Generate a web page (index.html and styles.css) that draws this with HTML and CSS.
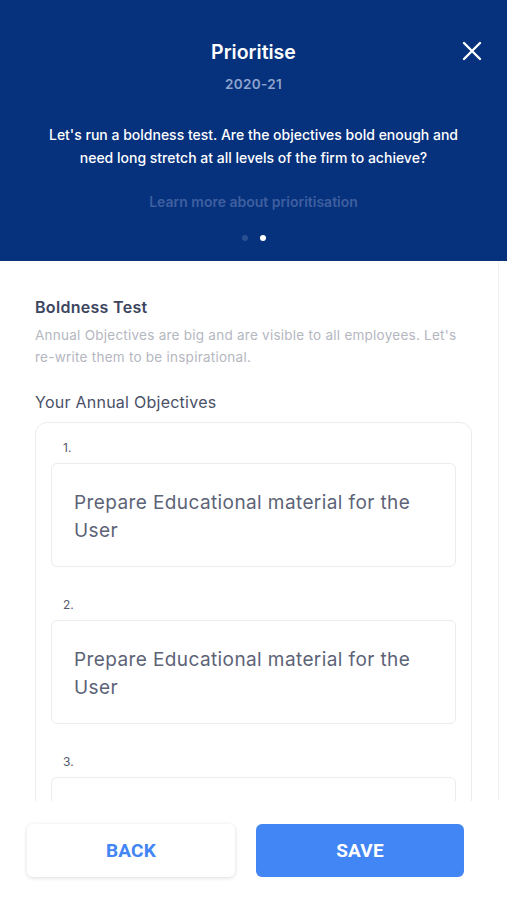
FILE: index.html
```html
<!DOCTYPE html>
<html lang="en">
<head>
<meta charset="utf-8">
<title>Prioritise</title>
<link rel="stylesheet" href="styles.css">
</head>
<body>
<div class="screen">
  <header class="hero">
    <h1 class="hero-title">Prioritise</h1>
    <div class="hero-year">2020-21</div>
    <p class="hero-text">Let's run a boldness test. Are the objectives bold enough and need long stretch at all levels of the firm to achieve?</p>
    <a class="hero-link">Learn more about prioritisation</a>
    <div class="dots"><span class="dot"></span><span class="dot active"></span></div>
    <button class="close" aria-label="Close">
      <svg width="20" height="20" viewBox="0 0 20 20"><path d="M2 2 L18 18 M18 2 L2 18" stroke="#fff" stroke-width="2.4" stroke-linecap="round"/></svg>
    </button>
  </header>
  <main class="content">
    <h2 class="section-title">Boldness Test</h2>
    <p class="section-desc">Annual Objectives are big and are visible to all employees. Let's re-write them to be inspirational.</p>
    <h3 class="list-title">Your Annual Objectives</h3>
    <div class="card">
      <div class="item">
        <div class="item-num">1.</div>
        <div class="item-box">Prepare Educational material for the User</div>
      </div>
      <div class="item">
        <div class="item-num">2.</div>
        <div class="item-box">Prepare Educational material for the User</div>
      </div>
      <div class="item">
        <div class="item-num">3.</div>
        <div class="item-box"></div>
      </div>
    </div>
  </main>
  <footer class="actions">
    <button class="btn btn-back">BACK</button>
    <button class="btn btn-save">SAVE</button>
  </footer>
</div>
</body>
</html>
```
FILE: styles.css
```css
* { box-sizing: border-box; }
html, body { margin: 0; padding: 0; background: #fff; }
body { font-family: Inter, "Noto Sans", sans-serif; }
.screen {
  width: 507px;
  height: 900px;
  display: flex;
  flex-direction: column;
  overflow: hidden;
}
.hero {
  position: relative;
  height: 261px;
  flex: none;
  background: #06317d;
  color: #fff;
  display: flex;
  flex-direction: column;
  align-items: center;
  text-align: center;
  padding-top: 40px;
}
.hero-title {
  margin: 0;
  font-size: 19.5px;
  line-height: 24px;
  font-weight: 600;
}
.hero-year {
  margin-top: 11px;
  font-size: 13.5px;
  line-height: 18px;
  font-weight: 600;
  color: #8ea4cc;
  letter-spacing: 0.3px;
}
.hero-text {
  margin: 30px 0 0;
  width: 440px;
  font-size: 14px;
  line-height: 23px;
  font-weight: 500;
}
.hero-link {
  margin-top: 24px;
  font-size: 14px;
  line-height: 18px;
  font-weight: 600;
  color: #3e5f9f;
}
.dots {
  margin-top: 24px;
  display: flex;
  gap: 12px;
}
.dot {
  width: 6px;
  height: 6px;
  border-radius: 50%;
  background: #2a4f90;
}
.dot.active { background: #fff; }
.close {
  position: absolute;
  top: 41px;
  right: 25px;
  width: 20px;
  height: 20px;
  padding: 0;
  border: 0;
  background: none;
}
.content {
  flex: 1;
  overflow: hidden;
  padding: 0 35px;
  border-right: 1px solid #f2f2f4;
  margin-right: 8px;
}
.section-title {
  margin: 36px 0 0;
  font-size: 16px;
  line-height: 21px;
  font-weight: 600;
  letter-spacing: 0.3px;
  color: #3c4560;
}
.section-desc {
  margin: 6px 0 0;
  font-size: 13.5px;
  line-height: 22px;
  letter-spacing: 0.25px;
  color: #b4b7bf;
}
.list-title {
  margin: 23px 0 0;
  font-size: 16px;
  line-height: 22px;
  font-weight: 400;
  letter-spacing: 0.25px;
  color: #4a5068;
}
.card {
  margin-top: 9px;
  width: 437px;
  border: 1px solid #ececee;
  border-radius: 12px;
  padding: 17px 15px 0;
}
.item { margin-bottom: 30px; }
.item-num {
  padding-left: 12px;
  font-size: 12px;
  line-height: 16px;
  color: #555a6a;
  margin-bottom: 7px;
}
.item-box {
  height: 104px;
  border: 1px solid #ececee;
  border-radius: 6px;
  padding: 25px 22px 23px;
  font-size: 19px;
  line-height: 28px;
  letter-spacing: 0.4px;
  color: #5d6377;
}
.actions {
  flex: none;
  height: 99px;
  display: flex;
  gap: 21px;
  padding: 23px 0 0 27px;
  font-family: Roboto, "Liberation Sans", sans-serif;
}
.btn {
  width: 208px;
  height: 53px;
  border-radius: 6px;
  border: 0;
  font-family: inherit;
  font-size: 19px;
  font-weight: 700;
  letter-spacing: 0.2px;
}
.btn-back {
  background: #fff;
  color: #4285f4;
  box-shadow: 0 1px 4px rgba(0,0,0,0.14);
}
.btn-save {
  background: #4285f4;
  color: #fff;
}
```
